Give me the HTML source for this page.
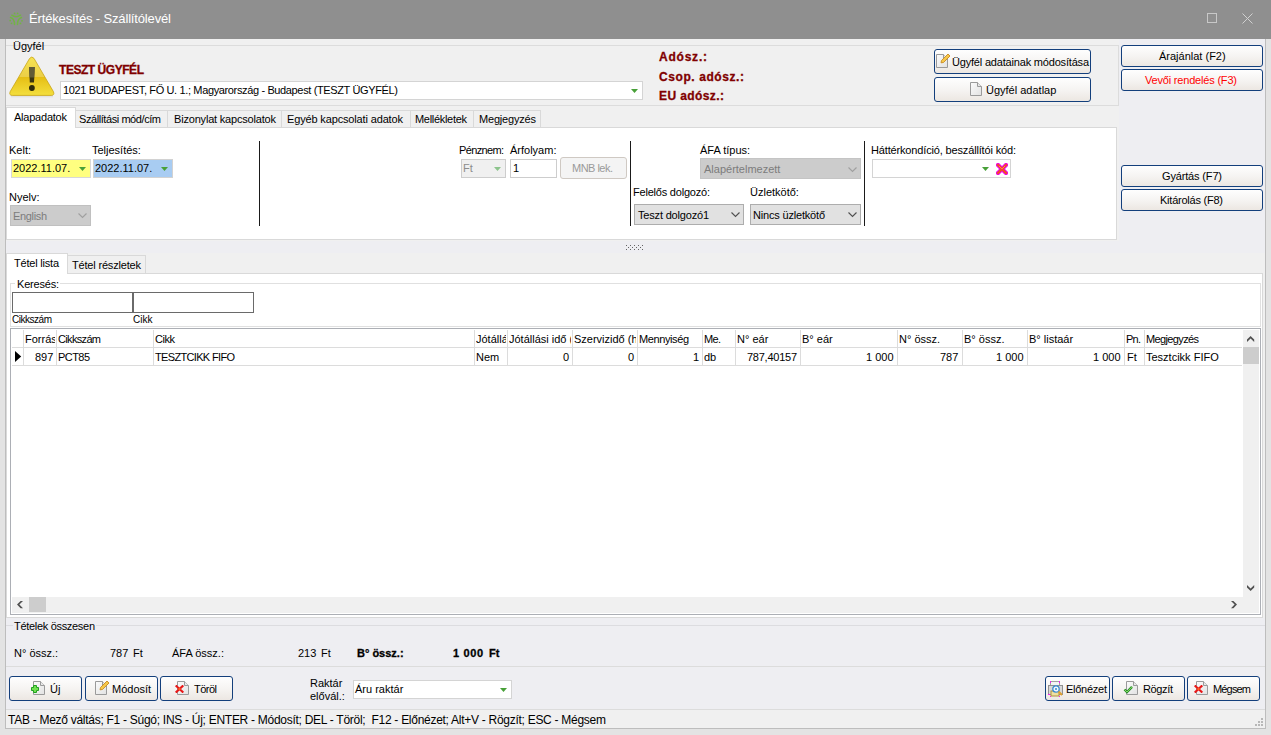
<!DOCTYPE html>
<html><head><meta charset="utf-8"><style>
html,body{margin:0;padding:0;width:1271px;height:735px;overflow:hidden;}
body{position:relative;font-family:"Liberation Sans",sans-serif;font-size:11px;}
div{position:absolute;}
.t{white-space:pre;}
</style></head><body>
<div style="left:0px;top:0px;width:1271px;height:735px;background:#e3e3e3"></div>
<div style="left:0px;top:0px;width:1271px;height:39px;background:#8f8f8f"></div>
<div style="left:5px;top:39px;width:1261px;height:690px;background:#bdbdbd"></div>
<div style="left:6px;top:39px;width:1259px;height:689px;background:#f0f0f0"></div>
<svg style="position:absolute;left:5px;top:8px" width="24" height="22" viewBox="5 8 24 22"><g fill="#72b443"><circle cx="14.6" cy="13.4" r="0.9"/><circle cx="17.6" cy="13.4" r="0.9"/><circle cx="10.2" cy="20.6" r="0.9"/><circle cx="11.5" cy="23.3" r="0.9"/><circle cx="22" cy="20.8" r="0.9"/><circle cx="20.5" cy="23.4" r="0.9"/></g><g fill="none" stroke="#72b443" stroke-width="1.5" stroke-linecap="round"><path d="M11.8 15.2 Q16 18.5 20.5 15.2"/><path d="M10.5 17.5 Q14.5 18.5 14.5 24.5"/><path d="M21.5 17.5 Q17.5 18.5 17.5 24.5"/></g></svg>
<div class="t" style="top:11px;font-size:13px;line-height:15px;color:#ffffff;letter-spacing:-0.152px;left:29px;">Értékesítés - Szállítólevél</div>
<div style="left:1207px;top:13px;width:10px;height:10px;border:1px solid #c8c8c8;box-sizing:border-box"></div>
<svg style="position:absolute;left:1242px;top:13px" width="11" height="11"><path d="M0.5 0.5 L10.5 10.5 M10.5 0.5 L0.5 10.5" stroke="#d0d0d0" stroke-width="1"/></svg>
<div style="left:1119px;top:39px;width:146px;height:214px;background:#eeeef2"></div>
<div style="left:1121px;top:45px;width:142px;height:22px;border:1px solid #133f7c;border-radius:3px;box-sizing:border-box;background:linear-gradient(#fefefe,#f5f3f1 55%,#ece7e2)"></div>
<div class="t" style="top:50px;font-size:11px;line-height:13px;color:#000;left:1159px;">Árajánlat (F2)</div>
<div style="left:1121px;top:69px;width:142px;height:22px;border:1px solid #133f7c;border-radius:3px;box-sizing:border-box;background:linear-gradient(#fefefe,#f5f3f1 55%,#ece7e2)"></div>
<div class="t" style="top:74px;font-size:11px;line-height:13px;color:#ff0000;letter-spacing:-0.188px;left:1145px;">Vevői rendelés (F3)</div>
<div style="left:1121px;top:165px;width:142px;height:22px;border:1px solid #133f7c;border-radius:3px;box-sizing:border-box;background:linear-gradient(#fefefe,#f5f3f1 55%,#ece7e2)"></div>
<div class="t" style="top:170px;font-size:11px;line-height:13px;color:#000;letter-spacing:-0.157px;left:1162px;">Gyártás (F7)</div>
<div style="left:1121px;top:189px;width:142px;height:22px;border:1px solid #133f7c;border-radius:3px;box-sizing:border-box;background:linear-gradient(#fefefe,#f5f3f1 55%,#ece7e2)"></div>
<div class="t" style="top:194px;font-size:11px;line-height:13px;color:#000;letter-spacing:-0.232px;left:1160px;">Kitárolás (F8)</div>
<div style="left:6px;top:45px;width:1112px;height:1px;background:#dcdcdc"></div>
<div style="left:6px;top:105px;width:1112px;height:1px;background:#dcdcdc"></div>
<div style="left:1118px;top:45px;width:1px;height:61px;background:#dcdcdc"></div>
<div class="t" style="top:40px;font-size:11px;line-height:13px;color:#000;left:13px;">Ügyfél</div>
<svg style="position:absolute;left:5px;top:52px" width="55" height="48" viewBox="5 52 55 48">
<defs><linearGradient id="wg" x1="0" y1="57" x2="0" y2="96" gradientUnits="userSpaceOnUse"><stop offset="0" stop-color="#f6e450"/><stop offset="0.5" stop-color="#eccf48"/><stop offset="0.52" stop-color="#e6bf14"/><stop offset="1" stop-color="#f4e040"/></linearGradient>
<linearGradient id="sh" x1="0" y1="0" x2="0" y2="1"><stop offset="0" stop-color="#000" stop-opacity="0.12"/><stop offset="1" stop-color="#000" stop-opacity="0"/></linearGradient></defs>
<rect x="11" y="95" width="42" height="3" fill="url(#sh)"/>
<path d="M29.6 58.4 Q31.8 55.6 34 58.4 L53.4 91.6 Q55 95.4 51.2 95.4 L12.4 95.4 Q8.6 95.4 10.2 91.6 Z" fill="url(#wg)" stroke="#c9a515" stroke-width="0.8"/>
<path d="M29 67 L34.8 67 L34 82.6 L29.8 82.6 Z" fill="#3a3410"/>
<path d="M29 67 L34.8 67 L34.2 77.5 L29.6 77.5 Z" fill="#6a6440" opacity="0.8"/>
<circle cx="31.9" cy="88" r="2.9" fill="#2e2a0c"/>
</svg>
<div class="t" style="top:63px;font-size:12px;line-height:14px;color:#800000;font-weight:bold;-webkit-text-stroke:0.3px #800000;letter-spacing:-0.455px;left:59px;">TESZT ÜGYFÉL</div>
<div style="left:60px;top:81px;width:583px;height:19px;background:#fff;border:1px solid #d4d4d4;box-sizing:border-box"></div>
<div class="t" style="top:84px;font-size:11px;line-height:13px;color:#000;letter-spacing:-0.362px;left:63px;">1021 BUDAPEST, FŐ U. 1.; Magyarország - Budapest (TESZT ÜGYFÉL)</div>
<svg style="position:absolute;left:631px;top:89px" width="7" height="4"><path d="M0 0 H7 L3.5 4 Z" fill="#48a038"/></svg>
<div class="t" style="top:50px;font-size:12px;line-height:14px;color:#800000;font-weight:bold;-webkit-text-stroke:0.3px #800000;letter-spacing:0.778px;left:659px;">Adósz.:</div>
<div class="t" style="top:70px;font-size:12px;line-height:14px;color:#800000;font-weight:bold;-webkit-text-stroke:0.3px #800000;letter-spacing:0.582px;left:659px;">Csop. adósz.:</div>
<div class="t" style="top:89px;font-size:12px;line-height:14px;color:#800000;font-weight:bold;-webkit-text-stroke:0.3px #800000;letter-spacing:0.406px;left:659px;">EU adósz.:</div>
<div style="left:934px;top:49px;width:157px;height:25px;border:1px solid #133f7c;border-radius:3px;box-sizing:border-box;background:linear-gradient(#fefefe,#f5f3f1 55%,#ece7e2)"></div>
<div style="left:934px;top:77px;width:157px;height:25px;border:1px solid #133f7c;border-radius:3px;box-sizing:border-box;background:linear-gradient(#fefefe,#f5f3f1 55%,#ece7e2)"></div>
<div class="t" style="top:56px;font-size:11px;line-height:13px;color:#000;letter-spacing:-0.187px;left:952px;">Ügyfél adatainak módosítása</div>
<div class="t" style="top:84px;font-size:11px;line-height:13px;color:#000;left:986px;">Ügyfél adatlap</div>
<svg style="position:absolute;left:936px;top:54px" width="12" height="14"><defs><linearGradient id="dg" x1="0" y1="0" x2="1" y2="1"><stop offset="0" stop-color="#fbfbfb"/><stop offset="1" stop-color="#e2e2e2"/></linearGradient></defs><path d="M0.5 0.5 H7.5 L11.5 4.5 V13.5 H0.5 Z" fill="url(#dg)" stroke="#9a9a9a"/><path d="M7.5 0.5 V4.5 H11.5" fill="#e8e8e8" stroke="#9a9a9a"/></svg>
<svg style="position:absolute;left:940px;top:53px" width="11" height="11"><path d="M1 9.8 L1.5 7.5 L8 1 L10 3 L3.5 9.5 Z" fill="#f6c84a" stroke="#c88a20" stroke-width="0.9"/></svg>
<svg style="position:absolute;left:970px;top:82px" width="12" height="14"><defs><linearGradient id="dg" x1="0" y1="0" x2="1" y2="1"><stop offset="0" stop-color="#fbfbfb"/><stop offset="1" stop-color="#e2e2e2"/></linearGradient></defs><path d="M0.5 0.5 H7.5 L11.5 4.5 V13.5 H0.5 Z" fill="url(#dg)" stroke="#9a9a9a"/><path d="M7.5 0.5 V4.5 H11.5" fill="#e8e8e8" stroke="#9a9a9a"/></svg>
<div style="left:6px;top:127px;width:1111px;height:113px;background:#fff;border:1px solid #d9d9d9;box-sizing:border-box"></div>
<div style="left:75px;top:110px;width:93px;height:18px;background:#f0f0f0;border:1px solid #d9d9d9;box-sizing:border-box"></div>
<div class="t" style="top:113px;font-size:11px;line-height:13px;color:#000;letter-spacing:-0.426px;left:79px;">Szállítási mód/cím</div>
<div style="left:167px;top:110px;width:115px;height:18px;background:#f0f0f0;border:1px solid #d9d9d9;box-sizing:border-box"></div>
<div class="t" style="top:113px;font-size:11px;line-height:13px;color:#000;letter-spacing:-0.189px;left:174px;">Bizonylat kapcsolatok</div>
<div style="left:281px;top:110px;width:130px;height:18px;background:#f0f0f0;border:1px solid #d9d9d9;box-sizing:border-box"></div>
<div class="t" style="top:113px;font-size:11px;line-height:13px;color:#000;letter-spacing:-0.148px;left:287px;">Egyéb kapcsolati adatok</div>
<div style="left:410px;top:110px;width:64px;height:18px;background:#f0f0f0;border:1px solid #d9d9d9;box-sizing:border-box"></div>
<div class="t" style="top:113px;font-size:11px;line-height:13px;color:#000;letter-spacing:-0.302px;left:415px;">Mellékletek</div>
<div style="left:473px;top:110px;width:68px;height:18px;background:#f0f0f0;border:1px solid #d9d9d9;box-sizing:border-box"></div>
<div class="t" style="top:113px;font-size:11px;line-height:13px;color:#000;letter-spacing:-0.189px;left:479px;">Megjegyzés</div>
<div style="left:6px;top:107px;width:70px;height:21px;background:#fff;border:1px solid #d9d9d9;border-bottom:none;box-sizing:border-box"></div>
<div class="t" style="top:111px;font-size:11px;line-height:13px;color:#000;letter-spacing:-0.227px;left:14px;">Alapadatok</div>
<div class="t" style="top:144px;font-size:11px;line-height:13px;color:#000;left:9px;">Kelt:</div>
<div class="t" style="top:144px;font-size:11px;line-height:13px;color:#000;left:92px;">Teljesítés:</div>
<div style="left:11px;top:159px;width:80px;height:19px;background:#ffff80;border:1px solid #d8d8d8;box-sizing:border-box"></div>
<div class="t" style="top:162px;font-size:11px;line-height:13px;color:#000;left:13px;">2022.11.07.</div>
<svg style="position:absolute;left:79px;top:167px" width="7" height="4"><path d="M0 0 H7 L3.5 4 Z" fill="#48a038"/></svg>
<div style="left:93px;top:159px;width:80px;height:19px;background:#a8ccf2;border:1px solid #d2d2d2;box-sizing:border-box"></div>
<div class="t" style="top:162px;font-size:11px;line-height:13px;color:#000;left:95px;">2022.11.07.</div>
<svg style="position:absolute;left:161px;top:167px" width="7" height="4"><path d="M0 0 H7 L3.5 4 Z" fill="#48a038"/></svg>
<div class="t" style="top:191px;font-size:11px;line-height:13px;color:#000;left:9px;">Nyelv:</div>
<div style="left:10px;top:205px;width:81px;height:21px;background:#cccccc;border:1px solid #c0c0c0;box-sizing:border-box"></div>
<div class="t" style="top:210px;font-size:11px;line-height:13px;color:#7c7c7c;letter-spacing:-0.346px;left:13px;">English</div>
<svg style="position:absolute;left:78px;top:213px" width="10" height="6"><path d="M0.5 0.5 L4.5 4.5 L8.5 0.5" fill="none" stroke="#a0a0a0" stroke-width="1.1"/></svg>
<div style="left:259px;top:141px;width:1px;height:85px;background:#1a1a1a"></div>
<div style="left:630px;top:141px;width:1px;height:85px;background:#1a1a1a"></div>
<div style="left:864px;top:141px;width:1px;height:85px;background:#1a1a1a"></div>
<div class="t" style="top:144px;font-size:11px;line-height:13px;color:#000;letter-spacing:-0.647px;left:459px;">Pénznem:</div>
<div class="t" style="top:144px;font-size:11px;line-height:13px;color:#000;left:510px;">Árfolyam:</div>
<div style="left:461px;top:159px;width:45px;height:19px;background:#f0f0f0;border:1px solid #cdcdcd;box-sizing:border-box"></div>
<div class="t" style="top:162px;font-size:11px;line-height:13px;color:#8c8c8c;left:463px;">Ft</div>
<svg style="position:absolute;left:494px;top:167px" width="7" height="4"><path d="M0 0 H7 L3.5 4 Z" fill="#8cc48c"/></svg>
<div style="left:510px;top:159px;width:47px;height:19px;background:#fff;border:1px solid #cdcdcd;box-sizing:border-box"></div>
<div class="t" style="top:162px;font-size:11px;line-height:13px;color:#000;left:513px;">1</div>
<div style="left:560px;top:157px;width:67px;height:22px;background:#f4f4f4;border:1px solid #cfc9c3;border-radius:3px;box-sizing:border-box"></div>
<div class="t" style="top:162px;font-size:11px;line-height:13px;color:#9a9a9a;letter-spacing:-0.517px;left:572px;">MNB lek.</div>
<div class="t" style="top:144px;font-size:11px;line-height:13px;color:#000;left:700px;">ÁFA típus:</div>
<div style="left:700px;top:158px;width:161px;height:21px;background:#cccccc;border:1px solid #c4c4c4;box-sizing:border-box"></div>
<div class="t" style="top:163px;font-size:11px;line-height:13px;color:#7c7c7c;left:704px;">Alapértelmezett</div>
<svg style="position:absolute;left:848px;top:167px" width="10" height="6"><path d="M0.5 0.5 L4.5 4.5 L8.5 0.5" fill="none" stroke="#a0a0a0" stroke-width="1.1"/></svg>
<div class="t" style="top:186px;font-size:11px;line-height:13px;color:#000;letter-spacing:-0.207px;left:633px;">Felelős dolgozó:</div>
<div class="t" style="top:186px;font-size:11px;line-height:13px;color:#000;left:750px;">Üzletkötő:</div>
<div style="left:634px;top:204px;width:110px;height:21px;background:#e1e1e1;border:1px solid #adadad;box-sizing:border-box"></div>
<div class="t" style="top:209px;font-size:11px;line-height:13px;color:#000;letter-spacing:-0.183px;left:638px;">Teszt dolgozó1</div>
<svg style="position:absolute;left:731px;top:212px" width="10" height="6"><path d="M0.5 0.5 L4.5 4.5 L8.5 0.5" fill="none" stroke="#505050" stroke-width="1.1"/></svg>
<div style="left:750px;top:204px;width:111px;height:21px;background:#e1e1e1;border:1px solid #adadad;box-sizing:border-box"></div>
<div class="t" style="top:209px;font-size:11px;line-height:13px;color:#000;letter-spacing:-0.185px;left:753px;">Nincs üzletkötő</div>
<svg style="position:absolute;left:848px;top:212px" width="10" height="6"><path d="M0.5 0.5 L4.5 4.5 L8.5 0.5" fill="none" stroke="#505050" stroke-width="1.1"/></svg>
<div class="t" style="top:144px;font-size:11px;line-height:13px;color:#000;letter-spacing:-0.155px;left:871px;">Háttérkondíció, beszállítói kód:</div>
<div style="left:872px;top:159px;width:139px;height:19px;background:#fff;border:1px solid #d4d4d4;box-sizing:border-box"></div>
<svg style="position:absolute;left:982px;top:167px" width="7" height="4"><path d="M0 0 H7 L3.5 4 Z" fill="#48a038"/></svg>
<svg style="position:absolute;left:996px;top:163px" width="12" height="12" viewBox="0 0 12 12"><path d="M2 2 L10 10 M10 2 L2 10" stroke="#f000f0" stroke-width="4.2" stroke-linecap="square"/><path d="M2 2 L10 10 M10 2 L2 10" stroke="#f05020" stroke-width="2.2" stroke-linecap="square"/><path d="M3 3 L6 6 L9 3" stroke="#ff9050" stroke-width="0.8" fill="none"/></svg>
<div style="left:6px;top:240px;width:1113px;height:1px;background:#f0f0f0"></div>
<div style="left:6px;top:241px;width:1259px;height:12px;background:#eeeef2"></div>
<div style="left:626px;top:245px;width:1px;height:1px;background:#646464"></div><div style="left:626px;top:249px;width:1px;height:1px;background:#646464"></div><div style="left:630px;top:245px;width:1px;height:1px;background:#646464"></div><div style="left:630px;top:249px;width:1px;height:1px;background:#646464"></div><div style="left:634px;top:245px;width:1px;height:1px;background:#646464"></div><div style="left:634px;top:249px;width:1px;height:1px;background:#646464"></div><div style="left:638px;top:245px;width:1px;height:1px;background:#646464"></div><div style="left:638px;top:249px;width:1px;height:1px;background:#646464"></div><div style="left:642px;top:245px;width:1px;height:1px;background:#646464"></div><div style="left:642px;top:249px;width:1px;height:1px;background:#646464"></div><div style="left:628px;top:247px;width:1px;height:1px;background:#646464"></div><div style="left:632px;top:247px;width:1px;height:1px;background:#646464"></div><div style="left:636px;top:247px;width:1px;height:1px;background:#646464"></div><div style="left:640px;top:247px;width:1px;height:1px;background:#646464"></div>
<div style="left:6px;top:253px;width:1259px;height:365px;background:#f0f0f0"></div>
<div style="left:6px;top:273px;width:1257px;height:345px;background:#fff;border:1px solid #d9d9d9;box-sizing:border-box"></div>
<div style="left:67px;top:255px;width:79px;height:19px;background:#f0f0f0;border:1px solid #d9d9d9;box-sizing:border-box"></div>
<div class="t" style="top:259px;font-size:11px;line-height:13px;color:#000;letter-spacing:-0.181px;left:72px;">Tétel részletek</div>
<div style="left:6px;top:253px;width:62px;height:21px;background:#fff;border:1px solid #d9d9d9;border-bottom:none;box-sizing:border-box"></div>
<div class="t" style="top:257px;font-size:11px;line-height:13px;color:#000;letter-spacing:-0.207px;left:14px;">Tétel lista</div>
<div style="left:10px;top:283px;width:1251px;height:44px;border:1px solid #e0e0e0;box-sizing:border-box"></div>
<div style="left:15px;top:277px;width:45px;height:12px;background:#fff"></div>
<div class="t" style="top:278px;font-size:11px;line-height:13px;color:#000;letter-spacing:-0.201px;left:17px;">Keresés:</div>
<div style="left:12px;top:292px;width:121px;height:21px;background:#fff;border:1px solid #6a6a6a;box-sizing:border-box"></div>
<div style="left:133px;top:292px;width:121px;height:21px;background:#fff;border:1px solid #6a6a6a;box-sizing:border-box"></div>
<div class="t" style="top:314px;font-size:10px;line-height:12px;color:#000;letter-spacing:-0.477px;left:12px;">Cikkszám</div>
<div class="t" style="top:314px;font-size:10px;line-height:12px;color:#000;left:133px;">Cikk</div>
<div style="left:10px;top:328px;width:1251px;height:287px;background:#fff;border:1px solid #acafb5;box-sizing:border-box"></div>
<div style="left:23px;top:330px;width:1px;height:36px;background:#dcdcdc"></div>
<div style="left:56px;top:330px;width:1px;height:36px;background:#dcdcdc"></div>
<div style="left:153px;top:330px;width:1px;height:36px;background:#dcdcdc"></div>
<div style="left:474px;top:330px;width:1px;height:36px;background:#dcdcdc"></div>
<div style="left:507px;top:330px;width:1px;height:36px;background:#dcdcdc"></div>
<div style="left:572px;top:330px;width:1px;height:36px;background:#dcdcdc"></div>
<div style="left:637px;top:330px;width:1px;height:36px;background:#dcdcdc"></div>
<div style="left:702px;top:330px;width:1px;height:36px;background:#dcdcdc"></div>
<div style="left:735px;top:330px;width:1px;height:36px;background:#dcdcdc"></div>
<div style="left:800px;top:330px;width:1px;height:36px;background:#dcdcdc"></div>
<div style="left:897px;top:330px;width:1px;height:36px;background:#dcdcdc"></div>
<div style="left:962px;top:330px;width:1px;height:36px;background:#dcdcdc"></div>
<div style="left:1027px;top:330px;width:1px;height:36px;background:#dcdcdc"></div>
<div style="left:1124px;top:330px;width:1px;height:36px;background:#dcdcdc"></div>
<div style="left:1144px;top:330px;width:1px;height:36px;background:#dcdcdc"></div>
<div style="left:12px;top:347px;width:1230px;height:1px;background:#dcdcdc"></div>
<div style="left:12px;top:365px;width:1230px;height:1px;background:#dcdcdc"></div>
<svg style="position:absolute;left:15px;top:351px" width="7" height="11"><path d="M0 0 L6.2 5.5 L0 11 Z" fill="#000"/></svg>
<div class="t" style="top:333px;font-size:11px;line-height:13px;color:#000;left:25px;width:30px;overflow:hidden;">Forrás</div>
<div class="t" style="top:333px;font-size:11px;line-height:13px;color:#000;letter-spacing:-0.667px;left:58px;">Cikkszám</div>
<div class="t" style="top:333px;font-size:11px;line-height:13px;color:#000;letter-spacing:-0.462px;left:155px;">Cikk</div>
<div class="t" style="top:333px;font-size:11px;line-height:13px;color:#000;left:476px;width:30px;overflow:hidden;">Jótállás</div>
<div class="t" style="top:333px;font-size:11px;line-height:13px;color:#000;left:509px;width:62px;overflow:hidden;">Jótállási idő (hó)</div>
<div class="t" style="top:333px;font-size:11px;line-height:13px;color:#000;left:574px;width:62px;overflow:hidden;">Szervizidő (hó)</div>
<div class="t" style="top:333px;font-size:11px;line-height:13px;color:#000;letter-spacing:-0.400px;left:639px;">Mennyiség</div>
<div class="t" style="top:333px;font-size:11px;line-height:13px;color:#000;letter-spacing:-0.669px;left:704px;">Me.</div>
<div class="t" style="top:333px;font-size:11px;line-height:13px;color:#000;left:737px;">N° eár</div>
<div class="t" style="top:333px;font-size:11px;line-height:13px;color:#000;left:802px;">B° eár</div>
<div class="t" style="top:333px;font-size:11px;line-height:13px;color:#000;left:899px;">N° össz.</div>
<div class="t" style="top:333px;font-size:11px;line-height:13px;color:#000;left:964px;">B° össz.</div>
<div class="t" style="top:333px;font-size:11px;line-height:13px;color:#000;left:1029px;">B° listaár</div>
<div class="t" style="top:333px;font-size:11px;line-height:13px;color:#000;letter-spacing:-0.755px;left:1126px;">Pn.</div>
<div class="t" style="top:333px;font-size:11px;line-height:13px;color:#000;letter-spacing:-0.633px;left:1146px;">Megjegyzés</div>
<div class="t" style="top:351px;font-size:11px;line-height:13px;color:#000;left:35.00px;">897</div>
<div class="t" style="top:351px;font-size:11px;line-height:13px;color:#000;letter-spacing:-0.559px;left:58px;">PCT85</div>
<div class="t" style="top:351px;font-size:11px;line-height:13px;color:#000;letter-spacing:-0.663px;left:155px;">TESZTCIKK FIFO</div>
<div class="t" style="top:351px;font-size:11px;line-height:13px;color:#000;left:476px;">Nem</div>
<div class="t" style="top:351px;font-size:11px;line-height:13px;color:#000;left:562.88px;">0</div>
<div class="t" style="top:351px;font-size:11px;line-height:13px;color:#000;left:627.88px;">0</div>
<div class="t" style="top:351px;font-size:11px;line-height:13px;color:#000;left:692.88px;">1</div>
<div class="t" style="top:351px;font-size:11px;line-height:13px;color:#000;left:704px;">db</div>
<div class="t" style="top:351px;font-size:11px;line-height:13px;color:#000;letter-spacing:-0.250px;left:747.00px;">787,40157</div>
<div class="t" style="top:351px;font-size:11px;line-height:13px;color:#000;left:866.00px;">1 000</div>
<div class="t" style="top:351px;font-size:11px;line-height:13px;color:#000;left:940.00px;">787</div>
<div class="t" style="top:351px;font-size:11px;line-height:13px;color:#000;left:996.00px;">1 000</div>
<div class="t" style="top:351px;font-size:11px;line-height:13px;color:#000;left:1093.00px;">1 000</div>
<div class="t" style="top:351px;font-size:11px;line-height:13px;color:#000;left:1127px;">Ft</div>
<div class="t" style="top:351px;font-size:11px;line-height:13px;color:#000;left:1146px;">Tesztcikk FIFO</div>
<div style="left:1243px;top:330px;width:16px;height:283px;background:#f0f0f0"></div>
<div style="left:1243px;top:347px;width:16px;height:17px;background:#cdcdcd"></div>
<div style="left:12px;top:597px;width:1231px;height:16px;background:#f0f0f0"></div>
<div style="left:29px;top:597px;width:17px;height:15px;background:#cdcdcd"></div>
<svg style="position:absolute;left:17px;top:601px" width="7" height="8"><polygon points="6,0 3.6000000000000014,0 0,3.6000000000000227 3.6000000000000014,7.2000000000000455 6,7.2000000000000455 2.3999999999999986,3.6000000000000227" fill="#505050"/></svg>
<svg style="position:absolute;left:1231px;top:601px" width="7" height="8"><polygon points="0,0 2.400000000000091,0 6,3.6000000000000227 2.400000000000091,7.2000000000000455 0,7.2000000000000455 3.599999999999909,3.6000000000000227" fill="#505050"/></svg>
<svg style="position:absolute;left:1247px;top:336px" width="8" height="7"><polygon points="0,6 0,3.6000000000000227 3.599999999999909,0 7.2000000000000455,3.6000000000000227 7.2000000000000455,6 3.599999999999909,2.3999999999999773" fill="#505050"/></svg>
<svg style="position:absolute;left:1247px;top:585px" width="8" height="7"><polygon points="0,0 0,2.3999999999999773 3.599999999999909,6 7.2000000000000455,2.3999999999999773 7.2000000000000455,0 3.599999999999909,3.6000000000000227" fill="#505050"/></svg>
<div style="left:6px;top:618px;width:1259px;height:49px;background:#eeeef2"></div>
<div style="left:6px;top:625px;width:1259px;height:1px;background:#dcdce0"></div>
<div style="left:13px;top:619px;width:83px;height:12px;background:#eeeef2"></div>
<div class="t" style="top:620px;font-size:11px;line-height:13px;color:#000;letter-spacing:-0.307px;left:14px;">Tételek összesen</div>
<div style="left:6px;top:666px;width:1259px;height:1px;background:#dcdcdc"></div>
<div class="t" style="top:647px;font-size:11px;line-height:13px;color:#000;left:14px;">N° össz.:</div>
<div class="t" style="top:647px;font-size:11px;line-height:13px;color:#000;left:110px;">787</div>
<div class="t" style="top:647px;font-size:11px;line-height:13px;color:#000;left:133px;">Ft</div>
<div class="t" style="top:647px;font-size:11px;line-height:13px;color:#000;left:172px;">ÁFA össz.:</div>
<div class="t" style="top:647px;font-size:11px;line-height:13px;color:#000;left:298px;">213</div>
<div class="t" style="top:647px;font-size:11px;line-height:13px;color:#000;left:321px;">Ft</div>
<div class="t" style="top:647px;font-size:11px;line-height:13px;color:#000;font-weight:bold;-webkit-text-stroke:0.3px #000;left:357px;">B° össz.:</div>
<div class="t" style="top:647px;font-size:11px;line-height:13px;color:#000;font-weight:bold;-webkit-text-stroke:0.3px #000;letter-spacing:0.618px;left:453px;">1 000</div>
<div class="t" style="top:647px;font-size:11px;line-height:13px;color:#000;font-weight:bold;-webkit-text-stroke:0.3px #000;left:489px;">Ft</div>
<div style="left:6px;top:667px;width:1259px;height:42px;background:#eeeef2"></div>
<div style="left:9px;top:676px;width:73px;height:25px;border:1px solid #133f7c;border-radius:3px;box-sizing:border-box;background:linear-gradient(#fefefe,#f5f3f1 55%,#ece7e2)"></div>
<div style="left:85px;top:676px;width:73px;height:25px;border:1px solid #133f7c;border-radius:3px;box-sizing:border-box;background:linear-gradient(#fefefe,#f5f3f1 55%,#ece7e2)"></div>
<div style="left:160px;top:676px;width:73px;height:25px;border:1px solid #133f7c;border-radius:3px;box-sizing:border-box;background:linear-gradient(#fefefe,#f5f3f1 55%,#ece7e2)"></div>
<div class="t" style="top:683px;font-size:11px;line-height:13px;color:#000;left:50px;">Új</div>
<div class="t" style="top:683px;font-size:11px;line-height:13px;color:#000;left:112px;">Módosít</div>
<div class="t" style="top:683px;font-size:11px;line-height:13px;color:#000;letter-spacing:-0.516px;left:194px;">Töröl</div>
<svg style="position:absolute;left:33px;top:681px" width="12" height="14"><defs><linearGradient id="dg" x1="0" y1="0" x2="1" y2="1"><stop offset="0" stop-color="#fbfbfb"/><stop offset="1" stop-color="#e2e2e2"/></linearGradient></defs><path d="M0.5 0.5 H7.5 L11.5 4.5 V13.5 H0.5 Z" fill="url(#dg)" stroke="#9a9a9a"/><path d="M7.5 0.5 V4.5 H11.5" fill="#e8e8e8" stroke="#9a9a9a"/></svg>
<svg style="position:absolute;left:95px;top:681px" width="12" height="14"><defs><linearGradient id="dg" x1="0" y1="0" x2="1" y2="1"><stop offset="0" stop-color="#fbfbfb"/><stop offset="1" stop-color="#e2e2e2"/></linearGradient></defs><path d="M0.5 0.5 H7.5 L11.5 4.5 V13.5 H0.5 Z" fill="url(#dg)" stroke="#9a9a9a"/><path d="M7.5 0.5 V4.5 H11.5" fill="#e8e8e8" stroke="#9a9a9a"/></svg>
<svg style="position:absolute;left:177px;top:681px" width="12" height="14"><defs><linearGradient id="dg" x1="0" y1="0" x2="1" y2="1"><stop offset="0" stop-color="#fbfbfb"/><stop offset="1" stop-color="#e2e2e2"/></linearGradient></defs><path d="M0.5 0.5 H7.5 L11.5 4.5 V13.5 H0.5 Z" fill="url(#dg)" stroke="#9a9a9a"/><path d="M7.5 0.5 V4.5 H11.5" fill="#e8e8e8" stroke="#9a9a9a"/></svg>
<svg style="position:absolute;left:31px;top:685px" width="9" height="9"><path d="M2.5 0.5 H5.5 V2.5 H7.5 V5.5 H5.5 V7.5 H2.5 V5.5 H0.5 V2.5 H2.5 Z" fill="#70e050" stroke="#20a020"/></svg>
<svg style="position:absolute;left:99px;top:680px" width="11" height="11"><path d="M1 9.8 L1.5 7.5 L8 1 L10 3 L3.5 9.5 Z" fill="#f6c84a" stroke="#c88a20" stroke-width="0.9"/></svg>
<svg style="position:absolute;left:175px;top:685px" width="9" height="8" viewBox="0 0 9 8"><path d="M1.5 1.2 L7.5 6.8 M7.5 1.2 L1.5 6.8" stroke="#e81818" stroke-width="2.2" stroke-linecap="square"/><circle cx="4.5" cy="4" r="1.2" fill="#ff6020"/></svg>
<div class="t" style="top:677px;font-size:11px;line-height:13px;color:#000;left:310px;">Raktár</div>
<div class="t" style="top:690px;font-size:11px;line-height:13px;color:#000;left:310px;">elővál.:</div>
<div style="left:353px;top:680px;width:159px;height:19px;background:#fff;border:1px solid #d4d4d4;box-sizing:border-box"></div>
<div class="t" style="top:683px;font-size:11px;line-height:13px;color:#000;left:355px;">Áru raktár</div>
<svg style="position:absolute;left:500px;top:688px" width="7" height="4"><path d="M0 0 H7 L3.5 4 Z" fill="#48a038"/></svg>
<div style="left:1045px;top:676px;width:65px;height:25px;border:1px solid #133f7c;border-radius:3px;box-sizing:border-box;background:linear-gradient(#fefefe,#f5f3f1 55%,#ece7e2)"></div>
<div style="left:1112px;top:676px;width:73px;height:25px;border:1px solid #133f7c;border-radius:3px;box-sizing:border-box;background:linear-gradient(#fefefe,#f5f3f1 55%,#ece7e2)"></div>
<div style="left:1187px;top:676px;width:73px;height:25px;border:1px solid #133f7c;border-radius:3px;box-sizing:border-box;background:linear-gradient(#fefefe,#f5f3f1 55%,#ece7e2)"></div>
<div class="t" style="top:683px;font-size:11px;line-height:13px;color:#000;letter-spacing:-0.258px;left:1066px;">Előnézet</div>
<div class="t" style="top:683px;font-size:11px;line-height:13px;color:#000;letter-spacing:-0.358px;left:1143px;">Rögzít</div>
<div class="t" style="top:683px;font-size:11px;line-height:13px;color:#000;letter-spacing:-0.836px;left:1213px;">Mégsem</div>
<svg style="position:absolute;left:1126px;top:681px" width="12" height="14"><defs><linearGradient id="dg" x1="0" y1="0" x2="1" y2="1"><stop offset="0" stop-color="#fbfbfb"/><stop offset="1" stop-color="#e2e2e2"/></linearGradient></defs><path d="M0.5 0.5 H7.5 L11.5 4.5 V13.5 H0.5 Z" fill="url(#dg)" stroke="#9a9a9a"/><path d="M7.5 0.5 V4.5 H11.5" fill="#e8e8e8" stroke="#9a9a9a"/></svg>
<svg style="position:absolute;left:1196px;top:681px" width="12" height="14"><defs><linearGradient id="dg" x1="0" y1="0" x2="1" y2="1"><stop offset="0" stop-color="#fbfbfb"/><stop offset="1" stop-color="#e2e2e2"/></linearGradient></defs><path d="M0.5 0.5 H7.5 L11.5 4.5 V13.5 H0.5 Z" fill="url(#dg)" stroke="#9a9a9a"/><path d="M7.5 0.5 V4.5 H11.5" fill="#e8e8e8" stroke="#9a9a9a"/></svg>
<svg style="position:absolute;left:1048px;top:681px" width="16" height="16" viewBox="0 0 16 16">
<rect x="2.5" y="0.5" width="9" height="5" fill="#f4f4f4" stroke="#a0a0a0"/>
<rect x="0.5" y="4.5" width="14" height="9" fill="#d8d8d8" stroke="#909090"/>
<rect x="3" y="10" width="8" height="5" fill="#f0e0a0" stroke="#b09040"/>
<circle cx="8" cy="8" r="3.2" fill="#f4f8fc" stroke="#3a8ad0" stroke-width="1.3"/>
<circle cx="8" cy="8" r="1" fill="#3a8ad0"/>
<path d="M10.5 10.5 L14 14" stroke="#e0a030" stroke-width="2"/>
<g fill="#f020f0"><rect x="2" y="0" width="1" height="2"/><rect x="11" y="0" width="1" height="2"/><rect x="0" y="13" width="2" height="1"/><rect x="2" y="15" width="1" height="1"/><rect x="11" y="15" width="1" height="1"/></g>
</svg>
<svg style="position:absolute;left:1123px;top:685px" width="11" height="9" viewBox="0 0 11 9"><path d="M1.5 4.5 L4 7 L9 1.8" fill="none" stroke="#2a8a2a" stroke-width="2.4"/><path d="M1.5 4.5 L4 7 L9 1.8" fill="none" stroke="#80e060" stroke-width="1"/></svg>
<svg style="position:absolute;left:1194px;top:685px" width="9" height="8" viewBox="0 0 9 8"><path d="M1.5 1.2 L7.5 6.8 M7.5 1.2 L1.5 6.8" stroke="#e81818" stroke-width="2.2" stroke-linecap="square"/><circle cx="4.5" cy="4" r="1.2" fill="#ff6020"/></svg>
<div style="left:6px;top:709px;width:1259px;height:1px;background:#dcdcdc"></div>
<div style="left:6px;top:710px;width:1259px;height:18px;background:#f0f0f0"></div>
<div class="t" style="top:713px;font-size:12px;line-height:14px;color:#000;letter-spacing:-0.278px;left:8px;">TAB - Mező váltás; F1 - Súgó; INS - Új; ENTER - Módosít; DEL - Töröl;  F12 - Előnézet; Alt+V - Rögzít; ESC - Mégsem</div>
<div style="left:1261px;top:718px;width:2px;height:2px;background:#b8b8b8"></div><div style="left:1258px;top:721px;width:2px;height:2px;background:#b8b8b8"></div><div style="left:1261px;top:721px;width:2px;height:2px;background:#b8b8b8"></div><div style="left:1255px;top:724px;width:2px;height:2px;background:#b8b8b8"></div><div style="left:1258px;top:724px;width:2px;height:2px;background:#b8b8b8"></div><div style="left:1261px;top:724px;width:2px;height:2px;background:#b8b8b8"></div>
</body></html>
